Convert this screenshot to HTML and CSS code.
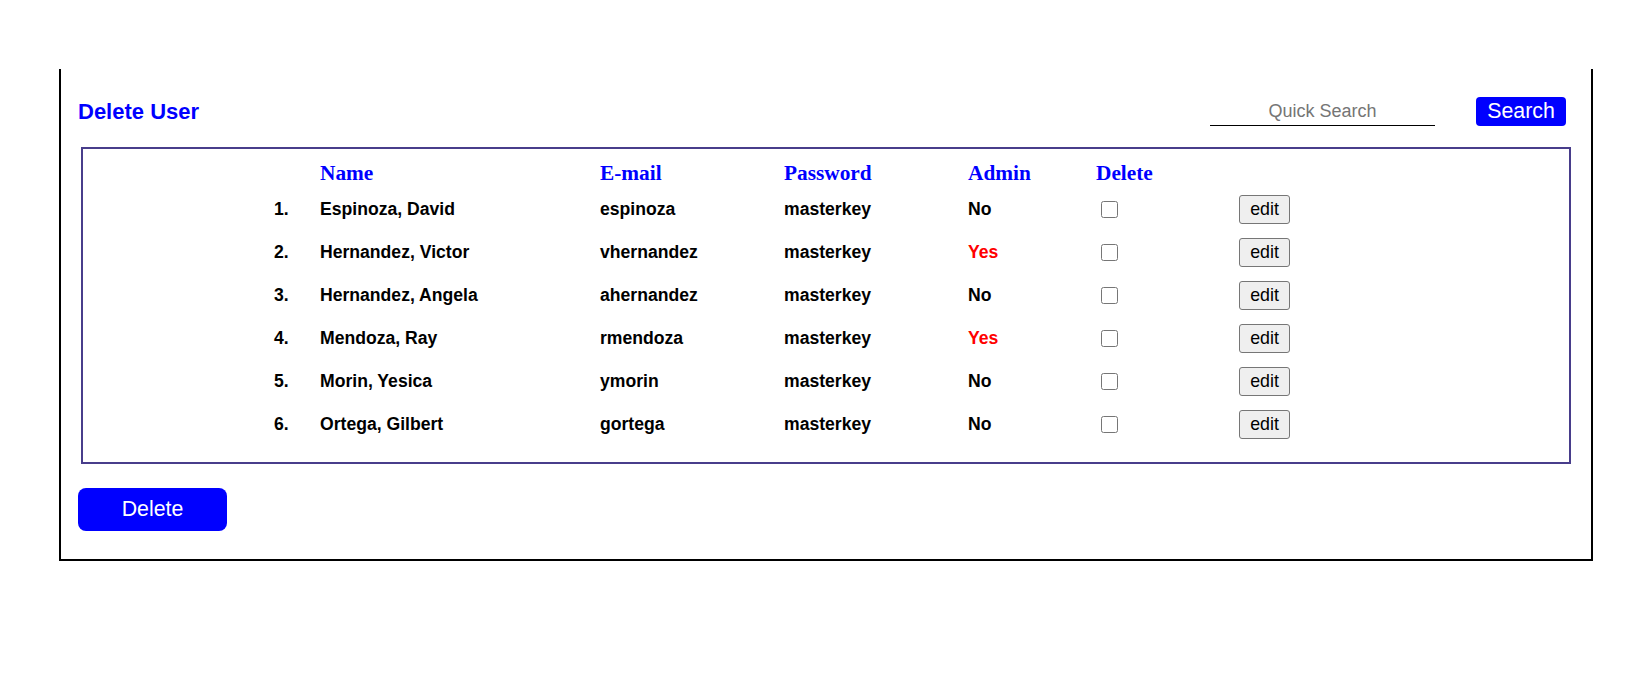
FILE: index.html
```html
<!DOCTYPE html>
<html>
<head>
<meta charset="utf-8">
<title>Delete User</title>
<link rel="stylesheet" href="styles.css">
</head>
<body>
<div class="panel">
  <div class="toolbar">
    <h2 class="title">Delete User</h2>
    <div class="search">
      <input class="search-input" type="text" placeholder="Quick Search">
      <button class="search-btn" type="button">Search</button>
    </div>
  </div>
  <div class="users">
    <div class="row head">
      <span></span>
      <span>Name</span>
      <span>E-mail</span>
      <span>Password</span>
      <span>Admin</span>
      <span>Delete</span>
      <span></span>
    </div>
    <div class="row">
      <span>1.</span><span>Espinoza, David</span><span>espinoza</span><span>masterkey</span><span>No</span>
      <span><input class="check" type="checkbox"></span><span><button class="edit" type="button">edit</button></span>
    </div>
    <div class="row">
      <span>2.</span><span>Hernandez, Victor</span><span>vhernandez</span><span>masterkey</span><span class="yes">Yes</span>
      <span><input class="check" type="checkbox"></span><span><button class="edit" type="button">edit</button></span>
    </div>
    <div class="row">
      <span>3.</span><span>Hernandez, Angela</span><span>ahernandez</span><span>masterkey</span><span>No</span>
      <span><input class="check" type="checkbox"></span><span><button class="edit" type="button">edit</button></span>
    </div>
    <div class="row">
      <span>4.</span><span>Mendoza, Ray</span><span>rmendoza</span><span>masterkey</span><span class="yes">Yes</span>
      <span><input class="check" type="checkbox"></span><span><button class="edit" type="button">edit</button></span>
    </div>
    <div class="row">
      <span>5.</span><span>Morin, Yesica</span><span>ymorin</span><span>masterkey</span><span>No</span>
      <span><input class="check" type="checkbox"></span><span><button class="edit" type="button">edit</button></span>
    </div>
    <div class="row">
      <span>6.</span><span>Ortega, Gilbert</span><span>gortega</span><span>masterkey</span><span>No</span>
      <span><input class="check" type="checkbox"></span><span><button class="edit" type="button">edit</button></span>
    </div>
  </div>
  <button class="delete-btn" type="button">Delete</button>
</div>
</body>
</html>
```
FILE: styles.css
```css
html, body {
  margin: 0;
  padding: 0;
  background: #fff;
}

body {
  font-family: "Liberation Sans", Arial, sans-serif;
}

.panel {
  box-sizing: border-box;
  width: 1534px;
  margin: 69px 0 0 59px;
  border: 2px solid #000;
  border-top: none;
  padding: 28px 20px 28px 17px;
}

.toolbar {
  display: flex;
  align-items: center;
  justify-content: space-between;
  height: 29px;
  padding-right: 5px;
}

.title {
  margin: 0;
  font-size: 22px;
  font-weight: bold;
  color: #0000ff;
  line-height: 29px;
}

.search {
  display: flex;
  align-items: center;
  gap: 41px;
}

.search-input {
  box-sizing: border-box;
  width: 225px;
  height: 27px;
  margin: 1px 0 0 0;
  padding: 0 0 1px 0;
  border: none;
  border-bottom: 1px solid #000;
  outline: none;
  font-family: "Liberation Sans", Arial, sans-serif;
  font-size: 18px;
  text-align: center;
  color: #000;
  background: transparent;
}

.search-input::placeholder {
  color: #757575;
}

.search-btn {
  box-sizing: border-box;
  width: 90px;
  height: 29px;
  padding: 0;
  border: none;
  border-radius: 4px;
  background: #0000ff;
  color: #fff;
  font-family: "Liberation Sans", Arial, sans-serif;
  font-size: 21.33px;
  line-height: 29px;
}

.users {
  box-sizing: border-box;
  margin: 21px 0 0 3px;
  border: 2px solid #483d8b;
  padding: 12px 0 16px 191px;
}

.row {
  display: grid;
  grid-template-columns: 46px 280px 184px 184px 128px 143px auto;
  align-items: center;
  height: 43px;
  font-size: 17.6px;
  font-weight: bold;
  color: #000;
}

.row span {
  display: flex;
  align-items: center;
}

.row.head {
  height: 27px;
  align-items: start;
  font-family: "Liberation Serif", "Times New Roman", serif;
  font-size: 21.33px;
  color: #0000ff;
}

.yes {
  color: #ff0000;
}

.check {
  width: 17px;
  height: 17px;
  margin: 0 0 0 5px;
}

.edit {
  box-sizing: border-box;
  width: 51px;
  height: 29px;
  padding: 0;
  border: 1px solid #767676;
  border-radius: 3px;
  background: #efefef;
  color: #000;
  font-family: "Liberation Sans", Arial, sans-serif;
  font-size: 17.8px;
  font-weight: normal;
}

.delete-btn {
  display: block;
  box-sizing: border-box;
  width: 149px;
  height: 43px;
  margin-top: 24px;
  padding: 0;
  border: none;
  border-radius: 8px;
  background: #0000ff;
  color: #fff;
  font-family: "Liberation Sans", Arial, sans-serif;
  font-size: 21.33px;
}
```
